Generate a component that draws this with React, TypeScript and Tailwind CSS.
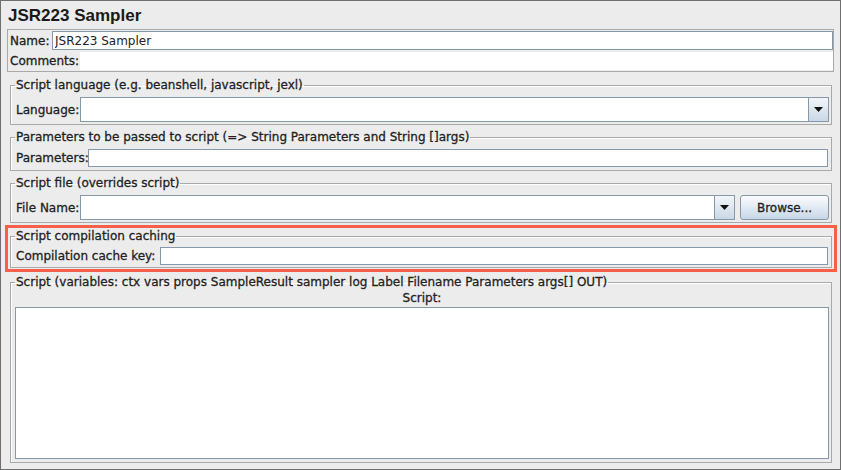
import React from "react";

function Legend({ children }: { children: React.ReactNode }) {
  return (
    <legend className="px-[1px] leading-[14px] text-[12px] text-[#222]">
      {children}
    </legend>
  );
}

function Field({ className = "" }: { className?: string }) {
  return (
    <input
      type="text"
      className={`border border-[#8699ab] bg-white outline-none px-[2px] text-[12px] ${className}`}
    />
  );
}

function Arrow() {
  return (
    <div className="w-[20px] h-full flex items-center justify-center border-l border-[#8699ab] bg-gradient-to-b from-[#f2f6fa] to-[#c9d7e6]">
      <svg width="9" height="5" viewBox="0 0 9 5">
        <path d="M0 0h9L4.5 5z" fill="#111" />
      </svg>
    </div>
  );
}

function Combo({ className = "" }: { className?: string }) {
  return (
    <div className={`flex h-[25px] border border-[#8699ab] bg-white ${className}`}>
      <div className="flex-1" />
      <Arrow />
    </div>
  );
}

const fs =
  "ml-[9px] w-[822px] border border-[#a9a9a9] shadow-[inset_1px_1px_0_#fff] pl-[4px]";

export default function App() {
  return (
    <div className="w-[841px] h-[470px] border border-[#6f6f6f] bg-[#ececec] font-['DejaVu_Sans',sans-serif] text-[12px] text-[#222] [-webkit-text-stroke:0.3px_#222] overflow-hidden">
      {/* Title */}
      <div className="h-[28px] pl-[7px] pt-[5px] font-['Liberation_Sans',sans-serif] text-[17px] font-bold leading-[20px] text-[#1a1a1a] [-webkit-text-stroke:0px]">
        JSR223 Sampler
      </div>

      {/* Name / Comments */}
      <div className="ml-[6px] w-[827px] h-[43px] border border-[#a9a9a9] pl-[1px] pt-[1px]">
        <div className="flex items-center h-[19px]">
          <span className="w-[43px] pl-[1px]">Name:</span>
          <input
            type="text"
            defaultValue="JSR223 Sampler"
            className="flex-1 h-[19px] border border-[#8699ab] bg-white outline-none pl-[2px] text-[12px] text-[#222] [-webkit-text-stroke:0px]"
          />
        </div>
        <div className="flex items-center h-[18px] mt-[2px]">
          <span className="w-[71px] pl-[1px]">Comments:</span>
          <div className="flex-1 h-[18px] bg-white" />
        </div>
      </div>

      {/* Script language */}
      <fieldset className={`${fs} mt-[6px] h-[47px] pr-[2px]`}>
        <Legend>Script language (e.g. beanshell, javascript, jexl)</Legend>
        <div className="flex items-center mt-[5px]">
          <span className="w-[65px] pl-[1px]">Language:</span>
          <Combo className="flex-1" />
        </div>
      </fieldset>

      {/* Parameters */}
      <fieldset className={`${fs} mt-[5px] h-[41px] pr-[3px]`}>
        <Legend>
          Parameters to be passed to script (=&gt; String Parameters and String []args)
        </Legend>
        <div className="flex items-center mt-[5px]">
          <span className="w-[73px] pl-[1px]">Parameters:</span>
          <Field className="flex-1 h-[18px]" />
        </div>
      </fieldset>

      {/* Script file */}
      <fieldset className={`${fs} mt-[5px] h-[47px] pr-[2px]`}>
        <Legend>Script file (overrides script)</Legend>
        <div className="flex items-center mt-[5px]">
          <span className="w-[65px] pl-[1px]">File Name:</span>
          <Combo className="flex-1" />
          <button className="ml-[5px] w-[89px] h-[25px] rounded-[3px] border border-[#8699ab] bg-gradient-to-b from-[#fbfcfd] to-[#c8d7e7] text-[12px] text-[#222]">
            Browse...
          </button>
        </div>
      </fieldset>

      {/* Script compilation caching (highlighted) */}
      <div className="ml-[4px] mt-[2px] w-[832px] h-[47px] border-[3px] border-[#f4604b] pt-[1px]">
        <fieldset className="ml-[2px] w-[822px] h-[39px] border border-[#a9a9a9] shadow-[inset_1px_1px_0_#fff] pl-[4px] pr-[3px]">
          <Legend>Script compilation caching</Legend>
          <div className="flex items-center mt-[4px]">
            <span className="w-[145px] pl-[1px]">Compilation cache key:</span>
            <Field className="flex-1 h-[18px]" />
          </div>
        </fieldset>
      </div>

      {/* Script */}
      <fieldset className={`${fs} mt-[3px] h-[188px] pr-[2px]`}>
        <Legend>
          Script (variables: ctx vars props SampleResult sampler log Label Filename Parameters args[] OUT)
        </Legend>
        <div className="text-center leading-[16px] mt-[1px]">Script:</div>
        <textarea className="block w-full h-[152px] mt-[1px] border border-[#8699ab] bg-white outline-none resize-none" />
      </fieldset>
    </div>
  );
}
